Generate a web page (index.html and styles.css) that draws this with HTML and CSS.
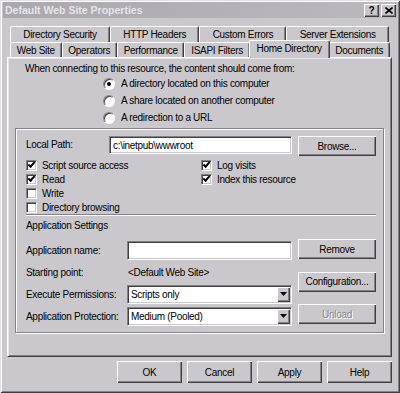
FILE: index.html
```html
<!DOCTYPE html>
<html lang="en">
<head>
    <meta charset="UTF-8">
    <title>Default Web Site Properties</title>
    <link rel="stylesheet" href="styles.css">
</head>
<body>
    <div class="window">
        <div class="titlebar">
            <span class="title">Default Web Site Properties</span>
            <div class="title-buttons">
                <span class="tbtn">?</span>
                <span class="tbtn">
                    <svg width="8" height="7" viewBox="0 0 8 7"><path d="M0.5 0.5 L7.5 6.5 M7.5 0.5 L0.5 6.5" stroke="#000" stroke-width="1.6"/></svg>
                </span>
            </div>
        </div>

        <div class="tabs">
            <div class="tab-row">
                <div class="tab">Directory Security</div>
                <div class="tab">HTTP Headers</div>
                <div class="tab">Custom Errors</div>
                <div class="tab">Server Extensions</div>
            </div>
            <div class="tab-row">
                <div class="tab">Web Site</div>
                <div class="tab">Operators</div>
                <div class="tab">Performance</div>
                <div class="tab">ISAPI Filters</div>
                <div class="tab active">Home Directory</div>
                <div class="tab">Documents</div>
            </div>
        </div>

        <div class="panel">
            <p class="intro">When connecting to this resource, the content should come from:</p>
            <div class="radios">
                <div class="option"><span class="radio checked"></span>A directory located on this computer</div>
                <div class="option"><span class="radio"></span>A share located on another computer</div>
                <div class="option"><span class="radio"></span>A redirection to a URL</div>
            </div>

            <div class="group">
                <div class="path-row">
                    <span class="path-label">Local Path:</span>
                    <span class="field path-field">c:\inetpub\wwwroot</span>
                    <span class="button">Browse...</span>
                </div>

                <div class="checks">
                    <div class="check-col first">
                        <div class="option"><span class="box checked"></span>Script source access</div>
                        <div class="option"><span class="box checked"></span>Read</div>
                        <div class="option"><span class="box"></span>Write</div>
                        <div class="option"><span class="box"></span>Directory browsing</div>
                    </div>
                    <div class="check-col">
                        <div class="option"><span class="box checked"></span>Log visits</div>
                        <div class="option"><span class="box checked"></span>Index this resource</div>
                    </div>
                </div>

                <div class="separator"></div>
                <div class="section-title">Application Settings</div>

                <div class="app">
                    <div class="app-fields">
                        <span>Application name:</span>
                        <span class="field"></span>
                        <span>Starting point:</span>
                        <span class="plain">&lt;Default Web Site&gt;</span>
                        <span>Execute Permissions:</span>
                        <span class="field select">Scripts only<span class="drop"><svg width="7" height="4" viewBox="0 0 7 4"><path d="M0 0 H7 L3.5 4 Z" fill="#000"/></svg></span></span>
                        <span>Application Protection:</span>
                        <span class="field select">Medium (Pooled)<span class="drop"><svg width="7" height="4" viewBox="0 0 7 4"><path d="M0 0 H7 L3.5 4 Z" fill="#000"/></svg></span></span>
                    </div>
                    <div class="app-buttons">
                        <span class="button">Remove</span>
                        <span class="button">Configuration...</span>
                        <span class="button disabled">Unload</span>
                    </div>
                </div>
            </div>
        </div>

        <div class="footer">
            <span class="button">OK</span>
            <span class="button">Cancel</span>
            <span class="button">Apply</span>
            <span class="button">Help</span>
        </div>
    </div>
</body>
</html>
```

FILE: styles.css
```css
body {
    margin: 0;
    font-family: 'Liberation Sans', Arial, sans-serif;
    font-size: 10px;
    letter-spacing: -0.3px;
    color: #000;
    background-color: #cbc8cd;
}

.window {
    width: 400px;
    height: 393px;
    box-sizing: border-box;
    padding: 2px 3px 0 3px;
    background-color: #cbc8cd;
    box-shadow: inset 1px 1px #e2e0e4, inset -1px -1px #404040, inset 2px 2px #fff, inset -2px -2px #858287;
}

.titlebar {
    height: 16px;
    display: flex;
    align-items: center;
    justify-content: space-between;
    padding: 0 1px 0 2px;
    background: linear-gradient(to right, #aaa8ae, #bbb9bf);
}

.title {
    font-weight: bold;
    font-size: 10.5px;
    letter-spacing: 0;
    color: #e6e5e8;
}

.title-buttons {
    display: flex;
    gap: 2px;
}

.tbtn {
    width: 15px;
    height: 13px;
    box-sizing: border-box;
    display: flex;
    align-items: center;
    justify-content: center;
    font-weight: bold;
    font-size: 10px;
    background-color: #cbc8cd;
    box-shadow: inset 1px 1px #fff, inset -1px -1px #404040, inset -2px -2px #858287;
}

.tabs {
    margin: 8px 7px 0 7px;
}

.tab-row {
    display: flex;
}

.tab-row:first-child {
    height: 16px;
    margin-right: 1px;
}

.tab-row:last-child {
    height: 15px;
}

.tab {
    flex: 1 1 auto;
    display: flex;
    align-items: center;
    justify-content: center;
    white-space: nowrap;
    border-top: 1px solid #fff;
    border-left: 1px solid #fff;
    border-right: 1px solid #404040;
    border-radius: 2px 2px 0 0;
    box-shadow: inset -1px 0 #858287;
    background-color: #cbc8cd;
}

.tab.active {
    position: relative;
    z-index: 1;
    margin: -2px -1px -1px -1px;
    padding: 0 1px 3px 1px;
}

.panel {
    margin: 0 5px 0 4px;
    height: 300px;
    box-sizing: border-box;
    padding: 4px 7px 0 7px;
    border-top: 1px solid #fff;
    border-left: 1px solid #fff;
    border-right: 1px solid #404040;
    border-bottom: 1px solid #404040;
    box-shadow: inset 1px 1px #e6e4e8, inset -1px -1px #858287;
}

.intro {
    margin: 0 0 0 10px;
    line-height: 13px;
}

.radios {
    margin-left: 88px;
}

.option {
    display: flex;
    align-items: center;
    gap: 6px;
    height: 17px;
    white-space: nowrap;
}

.radio {
    width: 12px;
    height: 12px;
    box-sizing: border-box;
    border-radius: 50%;
    border: 1px solid;
    border-color: #858287 #fff #fff #858287;
    box-shadow: inset 1px 1px #404040;
    background-color: #fff;
    display: flex;
    align-items: center;
    justify-content: center;
}

.radio.checked::after {
    content: '';
    width: 4px;
    height: 4px;
    border-radius: 50%;
    background-color: #000;
}

.group {
    margin-top: 2px;
    height: 205px;
    box-sizing: border-box;
    padding: 7px 5px 0 10px;
    border: 1px solid #858287;
    box-shadow: inset 1px 1px #fff, 1px 1px #fff;
}

.path-row {
    display: flex;
    align-items: flex-start;
    height: 20px;
}

.path-label {
    width: 83px;
    line-height: 17px;
}

.field {
    display: flex;
    align-items: center;
    box-sizing: border-box;
    height: 19px;
    padding-left: 3px;
    background-color: #fff;
    border: 1px solid;
    border-color: #858287 #fff #fff #858287;
    box-shadow: inset 1px 1px #404040, inset -1px -1px #cbc8cd;
    white-space: nowrap;
}

.path-field {
    width: 183px;
    height: 18px;
    margin-right: 6px;
}

.button {
    width: 78px;
    height: 20px;
    box-sizing: border-box;
    display: flex;
    align-items: center;
    justify-content: center;
    background-color: #cbc8cd;
    box-shadow: inset 1px 1px #fff, inset -1px -1px #404040, inset -2px -2px #858287;
    white-space: nowrap;
}

.button.disabled {
    color: #8a878c;
    text-shadow: 1px 1px #fff;
}

.checks {
    display: flex;
    margin-top: 2px;
}

.check-col.first {
    width: 175px;
}

.checks .option {
    height: 14px;
    gap: 5px;
}

.box {
    width: 11px;
    height: 11px;
    box-sizing: border-box;
    border: 1px solid;
    border-color: #858287 #fff #fff #858287;
    box-shadow: inset 1px 1px #404040, inset -1px -1px #cbc8cd;
    background-color: #fff;
    display: flex;
    align-items: center;
    justify-content: center;
}

.box.checked::after {
    content: '';
    width: 5px;
    height: 2px;
    margin: -2px 0 0 0;
    border-left: 2px solid #000;
    border-bottom: 2px solid #000;
    transform: rotate(-48deg);
}

.separator {
    margin: 0 2px 0 0;
    border-top: 1px solid #858287;
    border-bottom: 1px solid #fff;
}

.section-title {
    margin-top: 3px;
    line-height: 13px;
}

.app {
    display: flex;
    gap: 6px;
    margin-top: 7px;
}

.app-fields {
    display: grid;
    grid-template-columns: 101px 165px;
    grid-auto-rows: 22px;
    align-items: center;
}

.app-fields .plain {
    padding-left: 1px;
}

.select {
    position: relative;
    padding-right: 16px;
}

.drop {
    position: absolute;
    right: 1px;
    top: 1px;
    bottom: 1px;
    width: 13px;
    display: flex;
    align-items: center;
    justify-content: center;
    background-color: #cbc8cd;
    box-shadow: inset 1px 1px #fff, inset -1px -1px #404040, inset -2px -2px #858287;
}

.app-buttons {
    display: flex;
    flex-direction: column;
    gap: 12.5px;
}

.footer {
    display: flex;
    justify-content: flex-end;
    gap: 5px;
    margin: 4px 5px 0 0;
}

.footer .button {
    width: 65px;
    height: 22px;
}
```
